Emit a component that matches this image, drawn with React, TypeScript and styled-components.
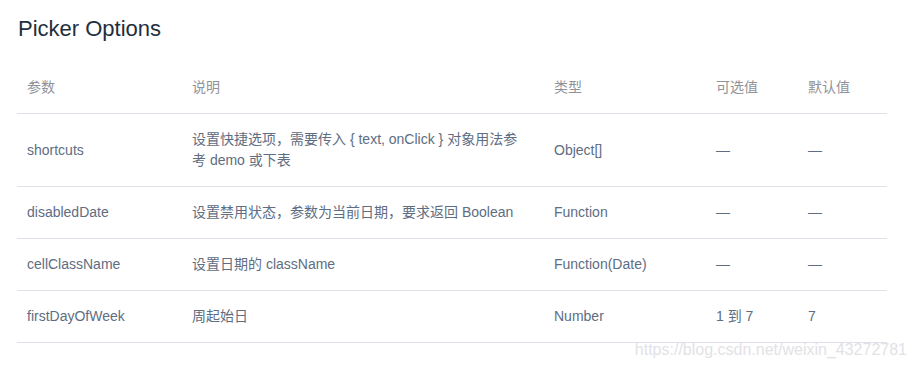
import React from "react";
import styled, { createGlobalStyle } from "styled-components";

const GlobalStyle = createGlobalStyle`
  html, body {
    margin: 0;
    padding: 0;
    background: #ffffff;
  }
  body {
    font-family: "Liberation Sans", Arial, "Noto Sans CJK SC", sans-serif;
  }
`;

interface Row {
  name: string;
  desc: string;
  type: string;
  options: string;
  def: string;
}

const rows: Row[] = [
  {
    name: "shortcuts",
    desc: "设置快捷选项，需要传入 { text, onClick } 对象用法参考 demo 或下表",
    type: "Object[]",
    options: "—",
    def: "—",
  },
  {
    name: "disabledDate",
    desc: "设置禁用状态，参数为当前日期，要求返回 Boolean",
    type: "Function",
    options: "—",
    def: "—",
  },
  {
    name: "cellClassName",
    desc: "设置日期的 className",
    type: "Function(Date)",
    options: "—",
    def: "—",
  },
  {
    name: "firstDayOfWeek",
    desc: "周起始日",
    type: "Number",
    options: "1 到 7",
    def: "7",
  },
];

const colWidths = [165, 362, 162, 92, 89];
const heads = ["参数", "说明", "类型", "可选值", "默认值"];

const App = () => {
  return (
    <Page>
      <GlobalStyle />
      <Title>Picker Options</Title>
      <Table>
        <colgroup>
          {colWidths.map((w, i) => (
            <col key={i} style={{ width: w }} />
          ))}
        </colgroup>
        <thead>
          <tr>
            {heads.map((h) => (
              <Th key={h}>{h}</Th>
            ))}
          </tr>
        </thead>
        <tbody>
          {rows.map((r) => (
            <tr key={r.name}>
              <Td>{r.name}</Td>
              <Td $padRight={18}>{r.desc}</Td>
              <Td>{r.type}</Td>
              <Td>{r.options}</Td>
              <Td>{r.def}</Td>
            </tr>
          ))}
        </tbody>
      </Table>
      <Watermark>https://blog.csdn.net/weixin_43272781</Watermark>
    </Page>
  );
};

const Page = styled.div`
  position: relative;
  width: 914px;
  height: 368px;
  padding: 0 17px;
  box-sizing: border-box;
  overflow: hidden;
`;

const Title = styled.h3`
  margin: 0 0 14px;
  padding: 13px 0 0 1px;
  height: 48px;
  box-sizing: border-box;
  font-size: 22px;
  line-height: 32px;
  font-weight: 400;
  color: #1f2f3d;
`;

const Table = styled.table`
  width: 870px;
  table-layout: fixed;
  border-collapse: collapse;
  font-size: 14px;
  line-height: 21px;
`;

const Th = styled.th`
  text-align: left;
  font-weight: 400;
  color: #909399;
  padding: 15px 10px;
  border-bottom: 1px solid #dfe2e8;
  white-space: nowrap;
`;

const Td = styled.td<{ $padRight?: number }>`
  text-align: left;
  color: #5e6d82;
  padding: 15px ${(p) => p.$padRight ?? 10}px 15px 10px;
  border-bottom: 1px solid #dfe2e8;
  vertical-align: middle;
`;

const Watermark = styled.div`
  position: absolute;
  right: 7px;
  top: 340px;
  font-family: "Liberation Sans", Arial, sans-serif;
  font-size: 16px;
  line-height: 20px;
  color: #e2e2e6;
  white-space: nowrap;
`;

export default App;
